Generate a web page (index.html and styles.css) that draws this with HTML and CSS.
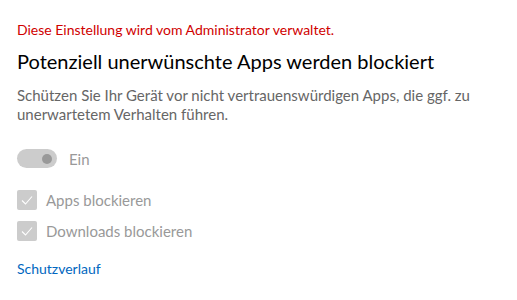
FILE: index.html
```html
<!DOCTYPE html>
<html lang="de">
<head>
    <meta charset="UTF-8">
    <title>Zuverlässigkeitsbasierter Schutz</title>
    <link rel="stylesheet" href="styles.css">
</head>
<body>
    <div class="page">
        <p class="admin-note">Diese Einstellung wird vom Administrator verwaltet.</p>
        <h2 class="title">Potenziell unerwünschte Apps werden blockiert</h2>
        <p class="desc">Schützen Sie Ihr Gerät vor nicht vertrauenswürdigen Apps, die ggf. zu unerwartetem Verhalten führen.</p>

        <div class="toggle-row">
            <span class="toggle"><span class="knob"></span></span>
            <span class="toggle-label">Ein</span>
        </div>

        <div class="check-row first">
            <span class="box">
                <svg width="20" height="20" viewBox="0 0 20 20"><path d="M5 10.5 L8.5 14 L15 6.5" fill="none" stroke="#fff" stroke-width="1.1"/></svg>
            </span>
            <span class="check-label">Apps blockieren</span>
        </div>
        <div class="check-row">
            <span class="box">
                <svg width="20" height="20" viewBox="0 0 20 20"><path d="M5 10.5 L8.5 14 L15 6.5" fill="none" stroke="#fff" stroke-width="1.1"/></svg>
            </span>
            <span class="check-label">Downloads blockieren</span>
        </div>

        <a class="link" href="#">Schutzverlauf</a>
    </div>
</body>
</html>
```
FILE: styles.css
```css
body {
    margin: 0;
    font-family: Lato, "Open Sans", sans-serif;
    background-color: #fff;
}
.page {
    padding: 20px 17px 0 17px;
}
.admin-note {
    margin: 0;
    font-size: 14px;
    line-height: 19px;
    color: #d00000;
}
.title {
    margin: 9px 0 0 0;
    font-size: 20px;
    font-weight: normal;
    line-height: 26px;
    color: #000;
}
.desc {
    margin: 12px 0 0 0;
    font-size: 15px;
    line-height: 19px;
    color: #666;
    width: 480px;
}
.toggle-row {
    display: flex;
    align-items: center;
    gap: 12px;
    margin-top: 25px;
}
.toggle {
    width: 40px;
    height: 19px;
    border-radius: 10px;
    background-color: #cccccc;
    display: flex;
    align-items: center;
    justify-content: flex-end;
    padding-right: 5px;
    box-sizing: border-box;
}
.knob {
    width: 10px;
    height: 10px;
    border-radius: 50%;
    background-color: #999;
}
.toggle-label {
    font-size: 15px;
    color: #999;
}
.check-row {
    display: flex;
    align-items: center;
    gap: 9px;
    margin-top: 11px;
}
.check-row.first {
    margin-top: 22px;
}
.box {
    width: 20px;
    height: 20px;
    border-radius: 2px;
    background-color: #cccccc;
    display: flex;
}
.check-label {
    font-size: 15px;
    color: #999;
}
.link {
    display: inline-block;
    margin-top: 19px;
    font-size: 14px;
    color: #0067c0;
    text-decoration: none;
}
```
